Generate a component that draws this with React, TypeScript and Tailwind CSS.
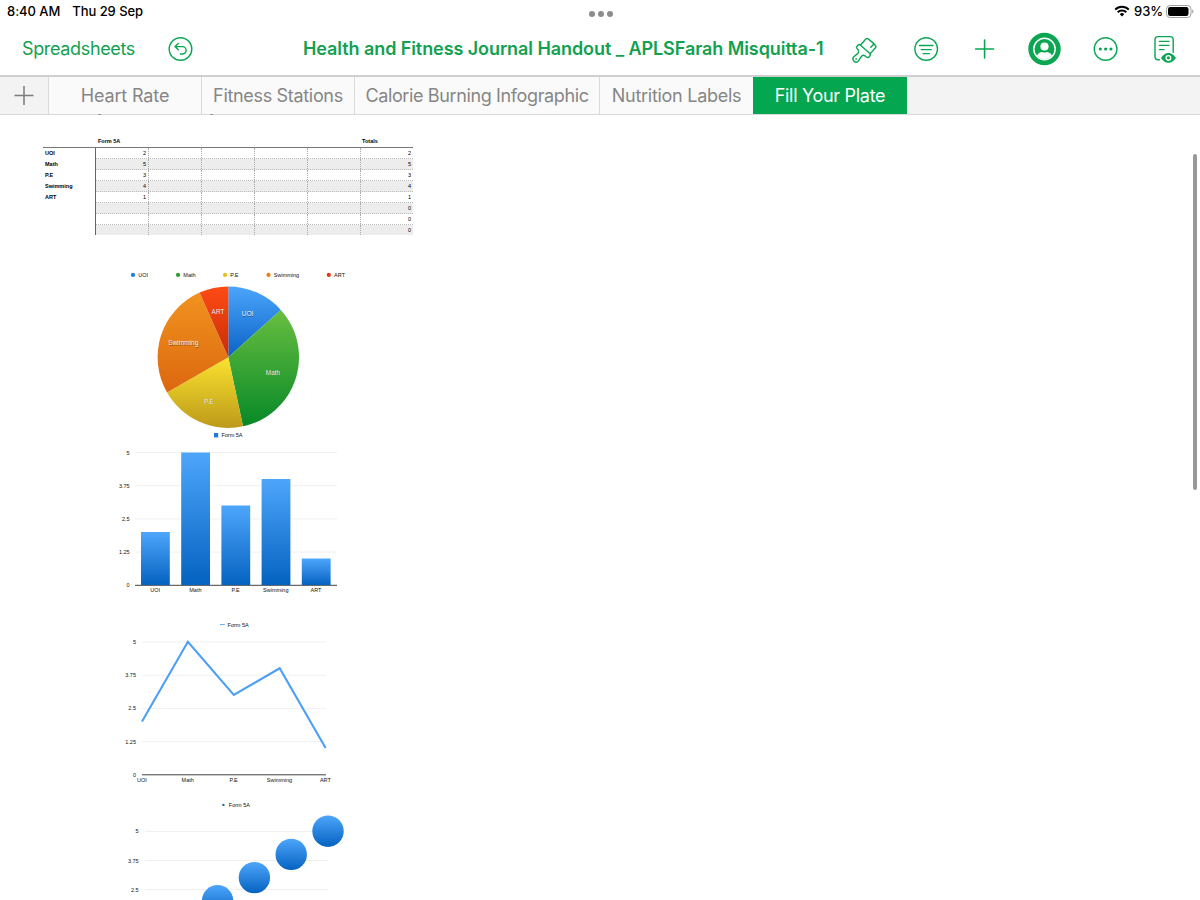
import React from 'react';

const GREEN = '#0aa652';

const TABS = [
    { label: 'Heart Rate', cls: 'w-[153px] tracking-[-0.15px]' },
    { label: 'Fitness Stations', cls: 'w-[153px] tracking-[-0.32px]' },
    { label: 'Calorie Burning Infographic', cls: 'w-[245px] tracking-[-0.37px]' },
    { label: 'Nutrition Labels', cls: 'w-[153px] tracking-[-0.28px]' },
];

const DATA = [
    { name: 'UOI', value: 2 },
    { name: 'Math', value: 5 },
    { name: 'P.E', value: 3 },
    { name: 'Swimming', value: 4 },
    { name: 'ART', value: 1 },
];

const ROWS = [...DATA, { name: '', value: 0 }, { name: '', value: 0 }, { name: '', value: 0 }];

const TICKS = ['5', '3.75', '2.5', '1.25', '0'];

const SLICES = [
    { top: '#4ba5fb', bottom: '#0a62c6', dot: '#1f7fe0', legendX: 133, lx: 247.5, ly: 316 },
    { top: '#68be40', bottom: '#078927', dot: '#2f9f32', legendX: 178, lx: 273, ly: 374.5 },
    { top: '#fae22f', bottom: '#bd9a19', dot: '#e3c022', legendX: 225, lx: 209, ly: 403.5 },
    { top: '#f09320', bottom: '#dd670e', dot: '#e67f18', legendX: 268.5, lx: 183.3, ly: 344.9 },
    { top: '#ff4b14', bottom: '#c62d07', dot: '#de3a0e', legendX: 328.8, lx: 218, ly: 313.5 },
];

function StatusBar() {
    return (
        <div className="flex h-[22px] items-center justify-between pl-[7px] pr-[6px] text-[13px] font-medium text-black">
            <div className="flex w-[400px] gap-3 pt-px">
                <span className="tracking-[-0.05px]">8:40 AM</span>
                <span className="tracking-[-0.05px]">Thu 29 Sep</span>
            </div>
            <div className="flex gap-[3px] pt-[5px]">
                <i className="h-[6px] w-[6px] rounded-full bg-[#8c8c8c]" />
                <i className="h-[6px] w-[6px] rounded-full bg-[#8c8c8c]" />
                <i className="h-[6px] w-[6px] rounded-full bg-[#8c8c8c]" />
            </div>
            <div className="flex w-[400px] items-center justify-end">
                <svg width="16" height="12" viewBox="0 0 16 12" fill="none" stroke="#000" strokeWidth="2">
                    <path d="M1.2 4.6a9.6 9.6 0 0 1 13.6 0" />
                    <path d="M3.7 7.2a6.1 6.1 0 0 1 8.6 0" />
                    <path d="M8 11.4 5.8 9.2a3.1 3.1 0 0 1 4.4 0Z" fill="#000" stroke="none" />
                </svg>
                <span className="ml-1 pt-px tracking-[-0.1px]">93%</span>
                <svg className="ml-[3px]" width="28" height="13" viewBox="0 0 28 13">
                    <rect x="0.5" y="0.5" width="24.5" height="12" rx="3.6" fill="none" stroke="#a0a0a0" />
                    <rect x="2" y="2" width="20.5" height="9" rx="2.2" fill="#000" />
                    <path d="M26.3 4.6v3.8c1.5-.6 1.5-3.2 0-3.8Z" fill="#8c8c8c" />
                </svg>
            </div>
        </div>
    );
}

function Icon({ children }: { children: React.ReactNode }) {
    return (
        <svg width="40" height="40" viewBox="-20 -20 40 40" fill="none" stroke={GREEN} strokeWidth="1.4" strokeLinecap="round" strokeLinejoin="round">
            {children}
        </svg>
    );
}

function Toolbar() {
    return (
        <div className="flex h-[53px] items-center pl-[22px] pr-[15px] text-[18px] text-[#12a150]">
            <span className="w-[139px] whitespace-nowrap tracking-[-0.35px]">Spreadsheets</span>
            <Icon>
                <circle cx="-0.5" r="11.3" />
                <path d="M-2.7 -5.6-6 -2.4l3.3 3.2M-5.8 -2.4H1.4a3.7 3.7 0 0 1 0 7.4H-.6" />
            </Icon>
            <span className="ml-[102px] flex-1 whitespace-nowrap font-semibold tracking-[-0.08px]">
                Health and Fitness Journal Handout _ APLSFarah Misquitta-1
            </span>
            <div className="flex gap-5">
                <Icon>
                    <g transform="translate(-0.2 0.2) rotate(42)">
                        <path d="M-6 0V-8.2Q-6 -9.8-4.4 -9.9Q1 -10.4 5.4 -9.9Q7 -9.8 7 -8.2V0" />
                        <path d="M3.2 -10V-5.4" />
                        <path d="M-5.8 -0.2H6.6Q8.2 -0.2 8.2 1.4V3Q8.2 4.8 6.4 4.8H4.6Q2.4 5.2 2.3 7.4L3.1 13a3.1 3.1 0 1 1-6.2 0L-2.3 7.4Q-2.4 5.2-4.6 4.8H-6Q-7.8 4.8-7.8 3V1.4Q-7.8 -0.2-5.8 -0.2Z" />
                        <circle cy="13" r="0.9" fill={GREEN} stroke="none" />
                    </g>
                </Icon>
                <Icon>
                    <circle cx="1.2" r="11.3" />
                    <path d="M-5.6 -3.5H8M-3.8 0.6H6.2M-1.9 4.6H4.3" />
                </Icon>
                <Icon>
                    <path d="M-9.4 0H8.6M-0.4 -9V9" strokeWidth="1.6" />
                </Icon>
                <Icon>
                    <circle cx="-0.5" r="16.2" fill={GREEN} stroke="none" />
                    <circle cx="-0.5" r="10.7" stroke="#fff" strokeWidth="1.5" />
                    <circle cx="-0.5" cy="-2.5" r="4.1" fill="#fff" stroke="none" />
                    <path d="M-8 6.3C-6.5 3.6-4 3.2-3 2.9Q-0.5 4.2 2 2.9C3 3.2 5.5 3.6 7 6.3A9.4 9.4 0 0 1-8 6.3Z" fill="#fff" stroke="none" />
                </Icon>
                <Icon>
                    <circle cx="0.6" r="11.3" />
                    <g fill={GREEN} stroke="none">
                        <circle cx="-4.7" r="1.6" />
                        <circle cx="0.6" r="1.6" />
                        <circle cx="5.9" r="1.6" />
                    </g>
                </Icon>
                <Icon>
                    <path d="M-5.6 10.8H-7a3 3 0 0 1-3-3V-9.4a3 3 0 0 1 3-3H5.2a3 3 0 0 1 3 3V3.2" />
                    <path d="M-5.6 -7.6H4M-5.6 -3.6H4M-5.6 0.6H-1" />
                    <path d="M-4.2 9C-1 5 1 4 3.4 4S8 5 11 9C8 12.8 6 13.8 3.4 13.8S-1 12.8-4.2 9Z" fill={GREEN} stroke="none" />
                    <circle cx="3.4" cy="8.9" r="2.3" stroke="#fff" fill={GREEN} strokeWidth="1.4" />
                </Icon>
            </div>
        </div>
    );
}

function SheetTabs() {
    return (
        <div className="flex h-[40px] border-b border-t-2 border-b-[#d9d9d9] border-t-[#cfcfcf] bg-[#f3f3f3] text-[18px] text-[#868686]">
            <div className="flex w-[49px] items-center justify-center border-r border-[#d9d9d9]">
                <svg width="20" height="20" viewBox="0 0 20 20" stroke="#7a7a7a" strokeWidth="1.5">
                    <path d="M0.5 9.5h19M10 0v19" />
                </svg>
            </div>
            {TABS.map((tab, i) => (
                <div key={tab.label} className={`${tab.cls} flex items-center justify-center whitespace-nowrap bg-[#fafafa] ${i < 3 ? 'border-r border-[#d9d9d9]' : ''}`}>
                    {tab.label}
                </div>
            ))}
            <div className="flex w-[154px] items-center justify-center whitespace-nowrap bg-[#04a64f] tracking-[-0.3px] text-white">Fill Your Plate</div>
        </div>
    );
}

function ScoreTable() {
    return (
        <div className="ml-[43px] mt-[21px] w-[370px] text-[5.5px] leading-[11px] text-black">
            <div className="flex h-[12px] border-b border-[#777] font-bold">
                <span className="ml-[55px] w-[264px]">Form 5A</span>
                <span>Totals</span>
            </div>
            {ROWS.map((row, i) => (
                <div key={i} className={`flex ${i === 7 ? 'h-[10px]' : 'h-[11px]'}`}>
                    <div className="w-[52px] pl-[2px] font-bold">{row.name}</div>
                    <div className="flex flex-1 border-l border-[#666]">
                        <div className={`flex flex-1 ${i < 7 ? 'border-b border-dotted border-[#bbb]' : ''} ${i % 2 ? 'bg-[#ededed]' : ''}`}>
                            <div className="w-[52px] pr-[2px] text-right">{row.name && row.value}</div>
                            {[0, 1, 2, 3].map(c => (
                                <div key={c} className="w-[53px] border-l border-dotted border-[#aaa]" />
                            ))}
                            <div className="w-[53px] border-l border-dotted border-[#aaa] pr-[2px] text-right">{row.value}</div>
                        </div>
                    </div>
                </div>
            ))}
        </div>
    );
}

function slicePath(from: number, to: number) {
    const cx = 228.3, cy = 357.2, r = 70.7;
    const pt = (v: number) => {
        const a = (v / 15) * Math.PI * 2;
        return `${cx + r * Math.sin(a)} ${cy - r * Math.cos(a)}`;
    };
    return `M${cx} ${cy}L${pt(from)}A${r} ${r} 0 0 1 ${pt(to)}Z`;
}

function PieChart() {
    let total = 0;
    return (
        <svg className="block" width="400" height="194" viewBox="0 235 400 194">
            <defs>
                {SLICES.map((s, i) => (
                    <linearGradient key={i} id={`slice${i}`} x1="0" y1="0" x2="0" y2="1">
                        <stop offset="0" stopColor={s.top} />
                        <stop offset="1" stopColor={s.bottom} />
                    </linearGradient>
                ))}
            </defs>
            {SLICES.map((s, i) => {
                const from = total;
                total += DATA[i].value;
                return <path key={i} d={slicePath(from, total)} fill={`url(#slice${i})`} />;
            })}
            {SLICES.map((s, i) => (
                <g key={i}>
                    <circle cx={s.legendX} cy="274.9" r="2.1" fill={s.dot} />
                    <text x={s.legendX + 5.3} y="276.9" fontSize="5.5" fill="#111">{DATA[i].name}</text>
                    <text x={s.lx + 0.4} y={s.ly + 0.9} fontSize="6.5" fill="#000" fillOpacity="0.45" textAnchor="middle">{DATA[i].name}</text>
                    <text x={s.lx} y={s.ly} fontSize="6.5" fill="#f4f4f4" textAnchor="middle">{DATA[i].name}</text>
                </g>
            ))}
        </svg>
    );
}

// horizontal rules with their value labels, shared by all three plots
function Grid({ x1, x2, y, step, count, labelX }: { x1: number; x2: number; y: number; step: number; count: number; labelX: number }) {
    return (
        <g>
            {TICKS.slice(0, count).map((t, i) => (
                <g key={t}>
                    <line x1={x1} x2={x2} y1={y + i * step} y2={y + i * step} stroke={t === '0' ? '#444' : '#f0f0f0'} strokeWidth="1" />
                    <text x={labelX} y={y + i * step + 2} fontSize="5.5" fill="#111" textAnchor="end">{t}</text>
                </g>
            ))}
        </g>
    );
}

function BarChart() {
    return (
        <svg className="block" width="400" height="181" viewBox="0 429 400 181">
            <defs>
                <linearGradient id="blue" x1="0" y1="0" x2="0" y2="1">
                    <stop offset="0" stopColor="#4ea6fb" />
                    <stop offset="1" stopColor="#0462c0" />
                </linearGradient>
            </defs>
            <rect x="214" y="433" width="4.2" height="4.4" fill="#1d7bdc" />
            <text x="221.4" y="437.2" fontSize="5.5" fill="#111">Form 5A</text>
            <Grid x1={135} x2={337} y={452.5} step={33.2} count={5} labelX={129.6} />
            {DATA.map((d, i) => (
                <g key={d.name}>
                    <rect x={141 + i * 40.2} y={585 - d.value * 26.5} width="28.8" height={d.value * 26.5} fill="url(#blue)" />
                    <text x={155.2 + i * 40.2} y="592.4" fontSize="5.5" fill="#111" textAnchor="middle">{d.name}</text>
                </g>
            ))}
        </svg>
    );
}

function LineChart() {
    const points = DATA.map((d, i) => `${142 + i * 45.9},${774.7 - d.value * 26.6}`).join(' ');
    return (
        <svg className="block" width="400" height="180" viewBox="0 610 400 180">
            <line x1="220" x2="224.8" y1="624.6" y2="624.6" stroke="#4c9ff5" strokeWidth="0.9" />
            <text x="227.6" y="627.1" fontSize="5.5" fill="#111">Form 5A</text>
            <Grid x1={142} x2={326} y={642} step={33.2} count={5} labelX={136} />
            <polyline points={points} fill="none" stroke="#4c9ff5" strokeWidth="2.1" />
            {DATA.map((d, i) => (
                <text key={d.name} x={141.8 + i * 45.9} y="782.3" fontSize="5.5" fill="#111" textAnchor="middle">{d.name}</text>
            ))}
        </svg>
    );
}

function BubbleChart() {
    return (
        <svg className="block" width="400" height="110" viewBox="0 790 400 110">
            <circle cx="223.4" cy="804.9" r="1.2" fill="#1d66c4" />
            <text x="228.8" y="807.1" fontSize="5.5" fill="#111">Form 5A</text>
            <Grid x1={145} x2={328} y={831.4} step={29.1} count={3} labelX={138.6} />
            {[0, 1, 2, 3].map(i => (
                <circle key={i} cx={328 - i * 36.8} cy={831.2 + i * 23.2} r="15.7" fill="url(#blue)" />
            ))}
        </svg>
    );
}

export default function App() {
    return (
        <div className="relative h-[900px] w-[1200px] overflow-hidden bg-white font-['Inter',sans-serif]">
            <StatusBar />
            <Toolbar />
            <SheetTabs />
            <main className="h-[785px] overflow-hidden font-['Liberation_Sans',sans-serif]">
                <ScoreTable />
                <PieChart />
                <BarChart />
                <LineChart />
                <BubbleChart />
            </main>
            {/* descenders of the scrolled title peeking out under the tabs */}
            <i className="absolute left-[98px] top-[114px] h-px w-[3px] bg-[#999]" />
            <i className="absolute left-[210px] top-[114px] h-px w-[3px] bg-[#999]" />
            <div className="absolute left-[1193px] top-[154px] h-[336px] w-[4px] rounded-full bg-[#999]" />
        </div>
    );
}
